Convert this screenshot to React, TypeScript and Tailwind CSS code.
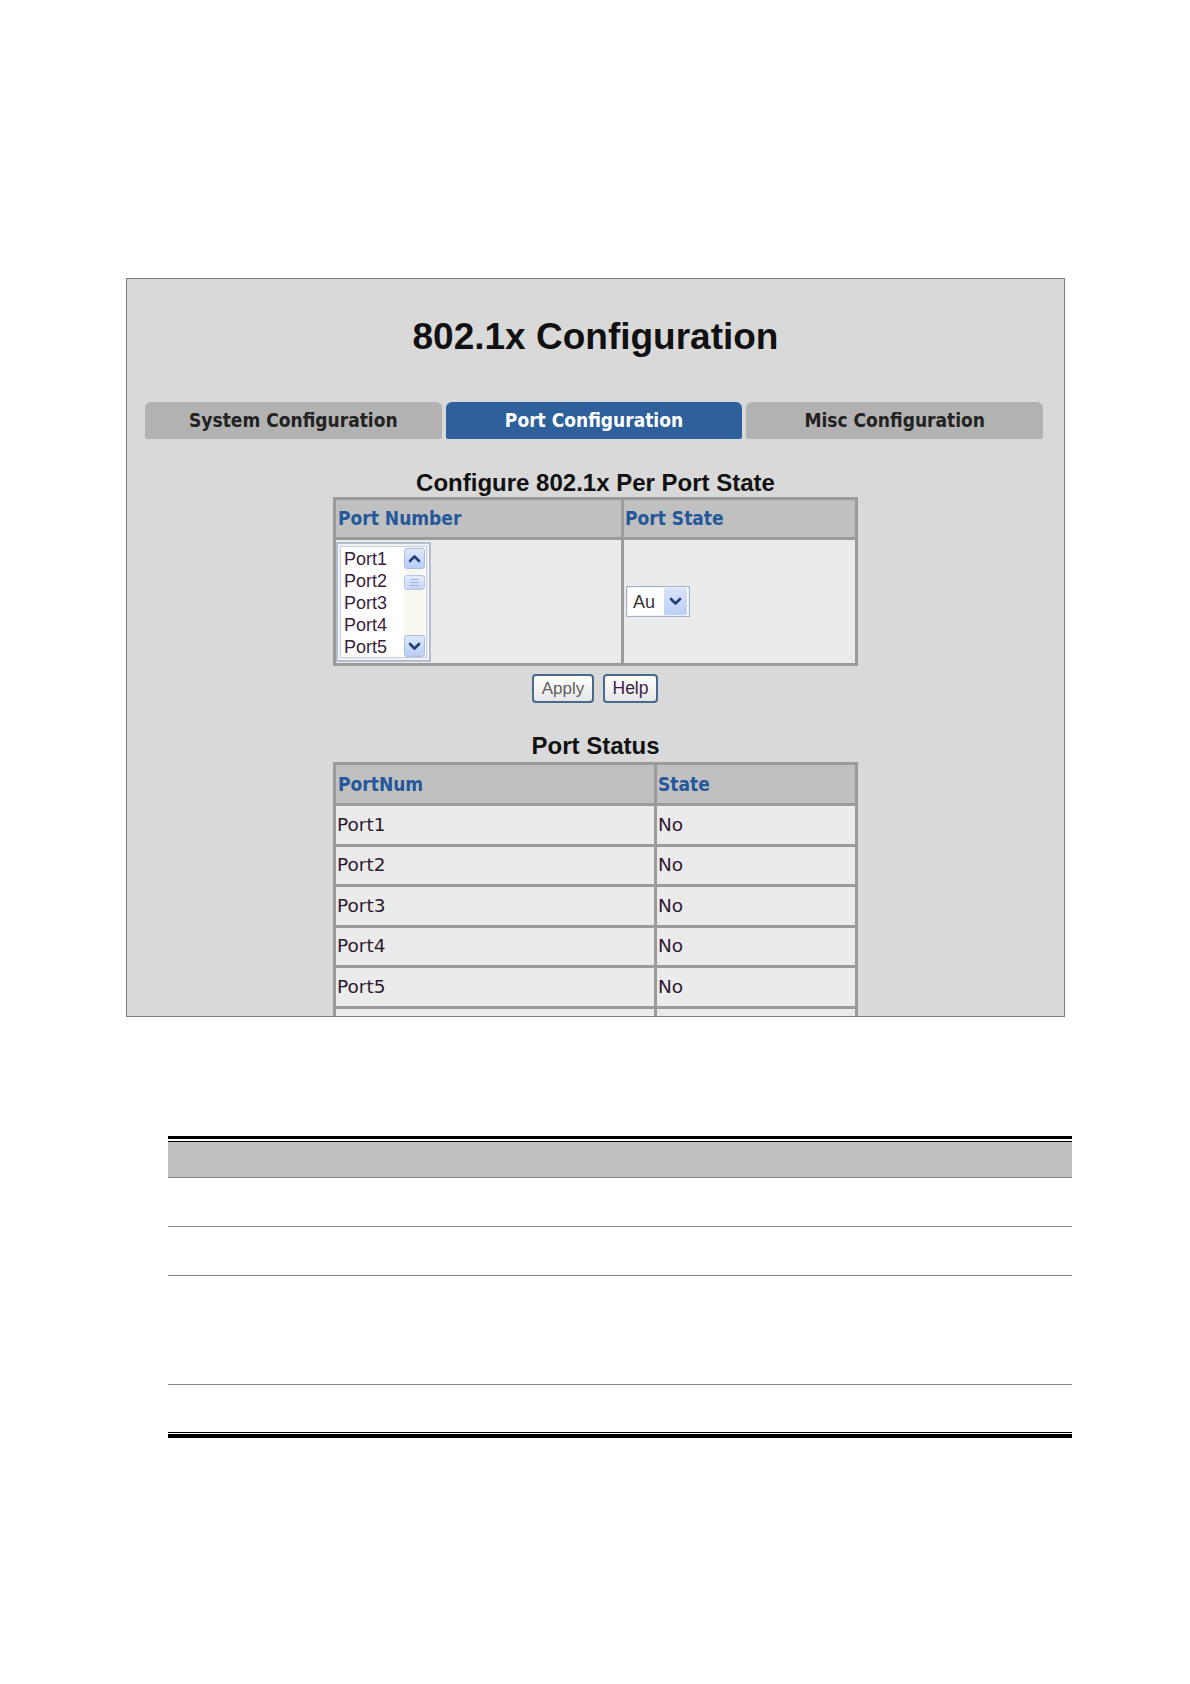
import React from "react";

const ports = ["Port1", "Port2", "Port3", "Port4", "Port5"];

function ChevronUp() {
  return (
    <svg width="13" height="9" viewBox="0 0 13 9">
      <polyline points="2,7 6.5,2.5 11,7" fill="none" stroke="#243f78" strokeWidth="2.6" strokeLinecap="round" strokeLinejoin="round" />
    </svg>
  );
}

function ChevronDown() {
  return (
    <svg width="13" height="9" viewBox="0 0 13 9">
      <polyline points="2,2 6.5,6.5 11,2" fill="none" stroke="#243f78" strokeWidth="2.6" strokeLinecap="round" strokeLinejoin="round" />
    </svg>
  );
}

function ListBox() {
  return (
    <div className="mt-[2px] w-[95px] h-[120px] border-2 border-[#b3bfcf] bg-[#eef1f5] p-[2px]">
      <div className="w-full h-full bg-white border border-[#c8cfd9] flex">
        <div className="w-[63px] pl-[3px] pt-[1px] font-['Liberation_Sans',Arial,sans-serif] text-[18px] text-[#3a1d3c]">
          {ports.map((p) => (
            <div key={p} className="h-[22px] leading-[22px]">
              {p}
            </div>
          ))}
        </div>
        <div className="w-[21px] flex flex-col pt-[1px] bg-[#f8f7f0]">
          <div className="h-[21px] rounded-[3px] border border-[#a9bde6] bg-gradient-to-b from-[#dfe8fc] to-[#b9cdf5] flex items-center justify-center">
            <ChevronUp />
          </div>
          <div className="mt-[6px] h-[15px] rounded-[3px] border border-[#b4c6ee] bg-gradient-to-b from-[#e3ebfd] to-[#c6d6f8] flex flex-col items-center justify-center gap-[2px]">
            <div className="w-[9px] h-[1px] bg-[#9fb4e2]" />
            <div className="w-[9px] h-[1px] bg-[#9fb4e2]" />
            <div className="w-[9px] h-[1px] bg-[#9fb4e2]" />
          </div>
          <div className="flex-1" />
          <div className="h-[22px] rounded-[3px] border border-[#a9bde6] bg-gradient-to-b from-[#dfe8fc] to-[#b9cdf5] flex items-center justify-center">
            <ChevronDown />
          </div>
        </div>
      </div>
    </div>
  );
}

function SelectBox() {
  return (
    <div className="ml-[2px] w-[64px] h-[31px] border border-[#a3b1c9] bg-[#eef1f6] p-[1px]">
      <div className="w-full h-full bg-white flex items-center">
        <span className="flex-1 pl-[5px] font-['Liberation_Sans',Arial,sans-serif] text-[18px] text-[#333] leading-none">
          Au
        </span>
        <div className="w-[23px] h-[27px] mr-[1px] rounded-[2px] bg-gradient-to-b from-[#d8e3fb] to-[#bccff6] flex items-center justify-center">
          <ChevronDown />
        </div>
      </div>
    </div>
  );
}

const headerText =
  "font-['DejaVu_Sans_Condensed','DejaVu_Sans',Verdana,sans-serif] font-bold text-[19px] text-[#25579b]";
const bodyText = "font-['DejaVu_Sans',Verdana,sans-serif] text-[18.5px] text-[#2e1a30]";

export default function App() {
  return (
    <div className="w-[1190px] h-[1684px] bg-white overflow-hidden">
      <div className="pt-[278px] pl-[126px]">
        <div className="w-[939px] h-[739px] border border-[#7f7f7f] bg-[#d9d9d9] overflow-hidden flex flex-col">
          <h1 className="mt-[36px] h-[44px] leading-[44px] text-center font-['Liberation_Sans',Arial,sans-serif] font-bold text-[37px] text-[#111]">
            802.1x Configuration
          </h1>

          <div className="mt-[43px] ml-[18px] mr-[21px] flex gap-[4px]">
            {[
              { label: "System Configuration", active: false },
              { label: "Port Configuration", active: true },
              { label: "Misc Configuration", active: false },
            ].map((t) => (
              <div
                key={t.label}
                className={
                  t.active
                    ? "flex-1 h-[37px] rounded-t-[6px] rounded-b-[2px] bg-[#2e609b] flex items-center justify-center font-['DejaVu_Sans_Condensed','DejaVu_Sans',Verdana,sans-serif] font-bold text-[19px] text-white"
                    : "flex-1 h-[37px] rounded-t-[6px] rounded-b-[2px] bg-[#b2b2b2] flex items-center justify-center font-['DejaVu_Sans_Condensed','DejaVu_Sans',Verdana,sans-serif] font-bold text-[19px] text-[#222]"
                }
              >
                {t.label}
              </div>
            ))}
          </div>

          <h2 className="mt-[30px] h-[28px] leading-[28px] text-center font-['Liberation_Sans',Arial,sans-serif] font-bold text-[24px] text-[#111]">
            Configure 802.1x Per Port State
          </h2>

          <div className="mx-auto w-[525px] bg-[#9b9b9b] p-[3px] grid grid-cols-[285px_231px] gap-[3px]">
            <div className="h-[37px] bg-[#c0c0c0] flex items-center pl-[2px]">
              <span className={headerText}>Port Number</span>
            </div>
            <div className="h-[37px] bg-[#c0c0c0] flex items-center pl-[1px]">
              <span className={headerText}>Port State</span>
            </div>
            <div className="h-[123px] bg-[#ebebeb]">
              <ListBox />
            </div>
            <div className="h-[123px] bg-[#ebebeb] flex items-center">
              <SelectBox />
            </div>
          </div>

          <div className="mt-[8px] flex justify-center gap-[9px] pr-[1px]">
            <button className="w-[62px] h-[29px] rounded-[4px] border-2 border-[#47698b] bg-gradient-to-b from-white to-[#e6e6e6] font-['Liberation_Sans',Arial,sans-serif] text-[17px] text-[#606060] leading-none">
              Apply
            </button>
            <button className="w-[55px] h-[29px] rounded-[4px] border-2 border-[#47698b] bg-gradient-to-b from-white to-[#e6e6e6] font-['Liberation_Sans',Arial,sans-serif] text-[17.5px] text-[#3a2142] leading-none">
              Help
            </button>
          </div>

          <h2 className="mt-[29px] h-[28px] leading-[28px] text-center font-['Liberation_Sans',Arial,sans-serif] font-bold text-[24px] text-[#111]">
            Port Status
          </h2>

          <div className="mt-[2px] mx-auto w-[525px] bg-[#9b9b9b] p-[3px] grid grid-cols-[318px_198px] gap-[3px] shrink-0">
            <div className="h-[38px] bg-[#c0c0c0] flex items-center pl-[2px]">
              <span className={headerText}>PortNum</span>
            </div>
            <div className="h-[38px] bg-[#c0c0c0] flex items-center pl-[1px]">
              <span className={headerText}>State</span>
            </div>
            {ports.map((p) => (
              <React.Fragment key={p}>
                <div className="h-[37.5px] bg-[#ebebeb] flex items-center pl-[1px]">
                  <span className={bodyText}>{p}</span>
                </div>
                <div className="h-[37.5px] bg-[#ebebeb] flex items-center pl-[1px]">
                  <span className={bodyText}>No</span>
                </div>
              </React.Fragment>
            ))}
            <div className="h-[37.5px] bg-[#ebebeb]" />
            <div className="h-[37.5px] bg-[#ebebeb]" />
          </div>
        </div>
      </div>

      <div className="mt-[119px] ml-[168px] w-[904px]">
        <div className="h-[3px] bg-black" />
        <div className="h-[2px]" />
        <div className="h-[1px] bg-black" />
        <div className="h-[36px] bg-[#c0c0c0] border-b border-[#888]" />
        <div className="h-[49px] border-b border-[#888]" />
        <div className="h-[49px] border-b border-[#888]" />
        <div className="h-[109px] border-b border-[#888]" />
        <div className="h-[47px]" />
        <div className="h-[1px] bg-black" />
        <div className="h-[1px]" />
        <div className="h-[4px] bg-black" />
      </div>
    </div>
  );
}
